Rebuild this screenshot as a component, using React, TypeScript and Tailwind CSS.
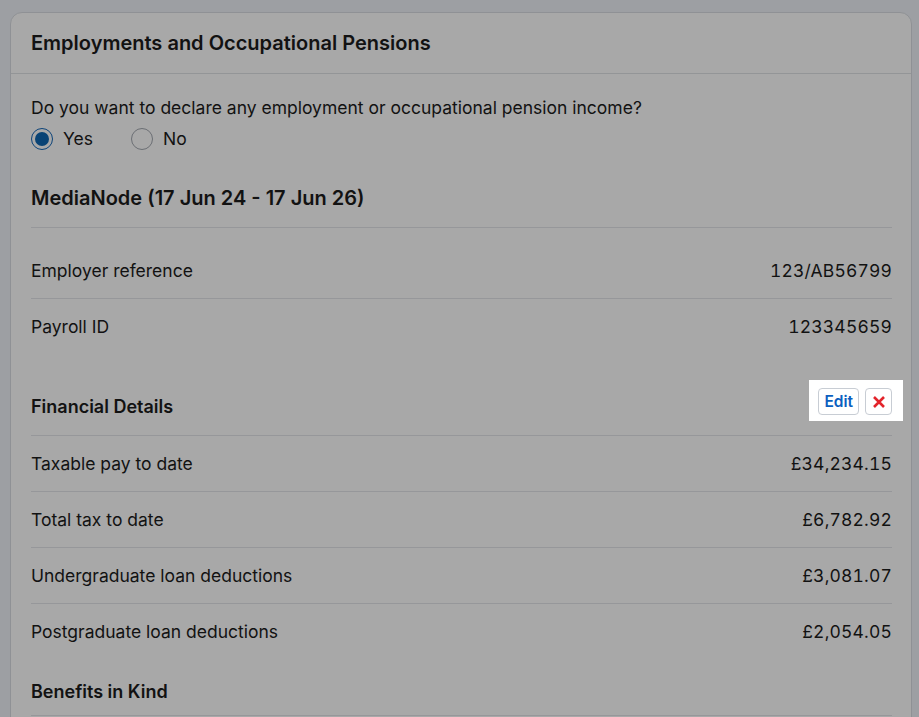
import React from "react";

type Row = { label: string; value: string };

const employerRows: Row[] = [
  { label: "Employer reference", value: "123/AB56799" },
  { label: "Payroll ID", value: "123345659" },
];

const financialRows: Row[] = [
  { label: "Taxable pay to date", value: "£34,234.15" },
  { label: "Total tax to date", value: "£6,782.92" },
  { label: "Undergraduate loan deductions", value: "£3,081.07" },
  { label: "Postgraduate loan deductions", value: "£2,054.05" },
];

function DataRows({ rows }: { rows: Row[] }) {
  return (
    <div>
      {rows.map((r, i) => (
        <div
          key={r.label}
          className={`flex h-[56px] items-center justify-between ${
            i < rows.length - 1 ? "border-b border-[#e4e6ea]" : ""
          }`}
        >
          <span>{r.label}</span>
          <span className="tabular-nums tracking-[0.01em]">{r.value}</span>
        </div>
      ))}
    </div>
  );
}

function Radio({ checked, label }: { checked?: boolean; label: string }) {
  return (
    <label className="flex items-center gap-[10px]">
      <span
        className={`flex h-[22px] w-[22px] items-center justify-center rounded-full border ${
          checked ? "border-[#1467b8]" : "border-[#a3a8b0]"
        } bg-white`}
      >
        {checked && <span className="h-[14px] w-[14px] rounded-full bg-[#0e67b2]" />}
      </span>
      <span>{label}</span>
    </label>
  );
}

export default function App() {
  return (
    <div
      className="h-[717px] overflow-hidden bg-[#eef2f8] pl-[10px] pr-[7px] pt-[12px] text-[17.5px] leading-[24px] text-[#1c1c1c]"
      style={{ fontFamily: "Inter, 'Noto Sans', sans-serif" }}
    >
      <div className="rounded-[12px] border border-[#dadde2] bg-white">
        <div className="flex h-[61px] items-center border-b border-[#dfe2e6] px-[20px]">
          <h1 className="text-[20px] font-semibold">Employments and Occupational Pensions</h1>
        </div>

        <div className="pl-[20px] pr-[19px] pt-[22px]">
          <p>Do you want to declare any employment or occupational pension income?</p>
          <div className="mt-[7px] flex items-center gap-[38px]">
            <Radio checked label="Yes" />
            <Radio label="No" />
          </div>

          <h2 className="mt-[33px] border-b border-[#e4e6ea] pb-[15px] text-[20px] font-semibold leading-[28px]">
            MediaNode (17 Jun 24 - 17 Jun 26)
          </h2>
          <div className="mt-[15px]">
            <DataRows rows={employerRows} />
          </div>

          <div className="flex items-end justify-between border-b border-[#e4e6ea] pb-[16px] pt-[33px]">
            <h3 className="text-[18px] font-semibold">Financial Details</h3>
            <div className="relative mb-[4px]">
              {/* spotlight cut-out: the huge shadow dims everything around the action buttons */}
              <div className="pointer-events-none absolute -bottom-[6px] -left-[9px] -right-[11px] -top-[8px] z-20 shadow-[0_0_0_9999px_rgba(0,0,0,0.34)]" />
              <div className="relative z-10 flex gap-[6px]">
                <button className="flex h-[27px] items-center rounded-[4px] border border-[#c8cdd4] bg-white px-[5px] text-[15.5px] font-semibold text-[#0b60c0]">
                  Edit
                </button>
                <button className="flex h-[27px] w-[27px] items-center justify-center rounded-[4px] border border-[#c8cdd4] bg-white">
                  <svg width="14" height="14" viewBox="0 0 14 14">
                    <path d="M2 2 L12 12 M12 2 L2 12" stroke="#e3242b" strokeWidth="2.6" strokeLinecap="butt" />
                  </svg>
                </button>
              </div>
            </div>
          </div>
          <DataRows rows={financialRows} />

          <h3 className="border-b border-[#e4e6ea] pb-[11px] pt-[20px] text-[18px] font-semibold">Benefits in Kind</h3>
          <div className="h-[60px]" />
        </div>
      </div>
    </div>
  );
}
